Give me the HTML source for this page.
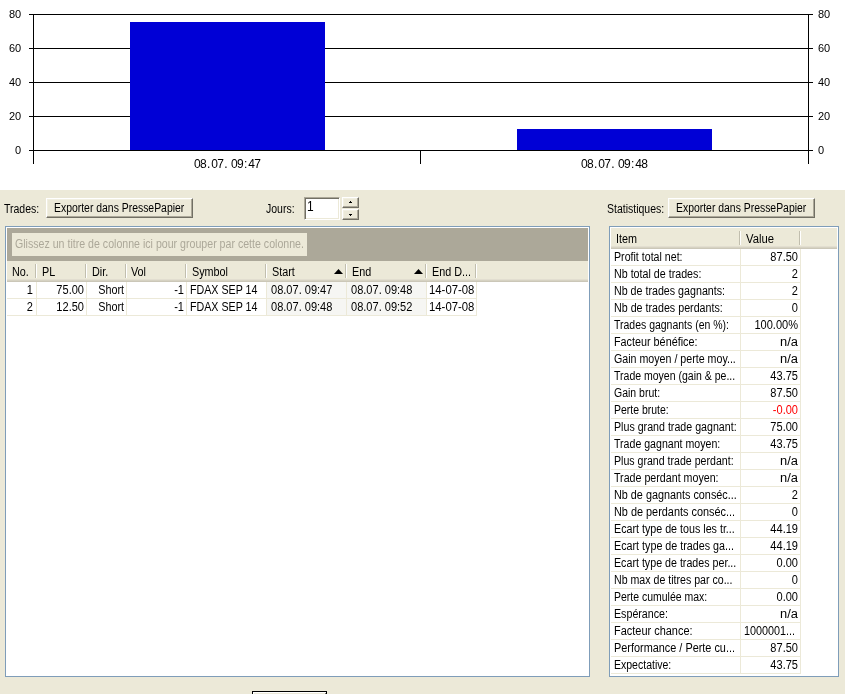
<!DOCTYPE html>
<html lang="fr">
<head>
<meta charset="utf-8">
<title>Trades</title>
<style>
*{box-sizing:border-box;margin:0;padding:0}
html,body{width:845px;height:694px;overflow:hidden;background:#ECE9D8}
body{position:relative;font-family:"Liberation Sans",Arial,sans-serif;font-size:12px;color:#000;line-height:14px}
#root{position:absolute;left:0;top:0;width:845px;height:694px;will-change:transform}
.abs{position:absolute}
.u{position:absolute;white-space:nowrap;height:14px;line-height:14px;font-size:12px;transform:scaleX(0.875);transform-origin:0 0}
.ur{position:absolute;white-space:nowrap;height:14px;line-height:14px;font-size:12px;text-align:right;transform:scaleX(0.875);transform-origin:100% 0}
#chart{position:absolute;left:0;top:0;width:845px;height:190px;background:#fff}
.hl{position:absolute;left:29px;width:784px;height:1px;background:#000}
.vl{position:absolute;width:1px;background:#000}
.bar{position:absolute;background:#0000D6}
.ax{position:absolute;white-space:nowrap;font-size:11px;height:13px;line-height:13px;letter-spacing:-.12px}
.axr{position:absolute;white-space:nowrap;font-size:11px;height:13px;line-height:13px;width:24px;text-align:right;letter-spacing:-.12px}
.xl{position:absolute;white-space:nowrap;font-size:12px;height:14px;line-height:14px;letter-spacing:-.67px}
.xl b{font-weight:normal;margin-left:1px;letter-spacing:.8px}
.btn{position:absolute;background:#ECE9D8;border:1px solid;border-color:#fff #716F64 #716F64 #fff;box-shadow:inset -1px -1px 0 #ACA899,inset 1px 1px 0 #F1EFE2}
.grid{position:absolute;background:#fff;border:1px solid #7F9DB9}
.hdr{position:absolute;background:#ECE9D8}
.hdr i{position:absolute;left:0;right:0;height:1px}
.sep{position:absolute;width:2px;border-left:1px solid #C1BEAE;border-right:1px solid #fff}
.gl{position:absolute;background:#ECE9D8}
.tri{position:absolute;width:0;height:0;border-left:5px solid transparent;border-right:5px solid transparent;border-bottom:5px solid #000}
</style>
</head>
<body>
<div id="root">
<div id="chart">
<div class="hl" style="top:14px"></div>
<div class="hl" style="top:48px"></div>
<div class="hl" style="top:82px"></div>
<div class="hl" style="top:116px"></div>
<div class="hl" style="top:150px"></div>
<div class="vl" style="left:33px;top:14px;height:150px"></div>
<div class="vl" style="left:808px;top:14px;height:150px"></div>
<div class="vl" style="left:420px;top:150px;height:14px"></div>
<div class="bar" style="left:130px;top:22px;width:195px;height:128px"></div>
<div class="bar" style="left:517px;top:129px;width:195px;height:21px"></div>
<div class="axr" style="left:-3px;top:8px">80</div>
<div class="ax" style="left:818px;top:8px">80</div>
<div class="axr" style="left:-3px;top:42px">60</div>
<div class="ax" style="left:818px;top:42px">60</div>
<div class="axr" style="left:-3px;top:76px">40</div>
<div class="ax" style="left:818px;top:76px">40</div>
<div class="axr" style="left:-3px;top:110px">20</div>
<div class="ax" style="left:818px;top:110px">20</div>
<div class="axr" style="left:-3px;top:144px">0</div>
<div class="ax" style="left:818px;top:144px">0</div>
<div class="xl" style="left:194px;top:157px">08<b>.</b>07<b>.</b> 09<b>:</b>47</div>
<div class="xl" style="left:581px;top:157px">08<b>.</b>07<b>.</b> 09<b>:</b>48</div>
</div>
<span class="u" style="left:4px;top:202px">Trades:</span>
<div class="btn" style="left:46px;top:198px;width:147px;height:20px"><span class="u" style="left:7px;top:2px;transform:scaleX(0.868)">Exporter dans PressePapier</span></div>
<span class="u" style="left:266px;top:202px">Jours:</span>
<div class="abs" style="left:304px;top:197px;width:36px;height:23px;background:#fff;border:1px solid;border-color:#ACA899 #fff #fff #ACA899;box-shadow:inset 1px 1px 0 #716F64,inset -1px -1px 0 #ECE9D8"><span class="u" style="left:2px;top:-1px;font-size:15px;height:17px;line-height:17px;transform:scaleX(.8)">1</span></div>
<div class="btn" style="left:342px;top:197px;width:17px;height:11px"></div>
<div class="btn" style="left:342px;top:209px;width:17px;height:11px"></div>
<div class="abs" style="left:350px;top:201px;width:1px;height:1px;background:#000"></div><div class="abs" style="left:349px;top:202px;width:3px;height:1px;background:#000"></div>
<div class="abs" style="left:349px;top:214px;width:3px;height:1px;background:#000"></div><div class="abs" style="left:350px;top:215px;width:1px;height:1px;background:#000"></div>
<span class="u" style="left:607px;top:202px">Statistiques:</span>
<div class="btn" style="left:668px;top:198px;width:147px;height:20px"><span class="u" style="left:7px;top:2px;transform:scaleX(0.868)">Exporter dans PressePapier</span></div>
<div class="grid" style="left:5px;top:226px;width:585px;height:451px">
<div class="abs" style="left:1px;top:1px;width:581px;height:33px;background:#ACA899"></div>
<div class="abs" style="left:6px;top:6px;width:295px;height:23px;background:#ECE9D8"><span class="u" style="left:3px;top:4px;transform:scaleX(0.884);color:#ACA899">Glissez un titre de colonne ici pour grouper par cette colonne.</span></div>
<div class="hdr" style="left:1px;top:34px;width:581px;height:21px"><i style="bottom:2px;background:#E2DED0"></i><i style="bottom:1px;background:#D6D2C2"></i><i style="bottom:0;background:#CBC7B8"></i>
<span class="u" style="left:5px;top:4px;transform:scaleX(0.9)">No.</span>
<div class="sep" style="left:28px;top:3px;height:14px"></div>
<span class="u" style="left:35px;top:4px;transform:scaleX(0.9)">PL</span>
<div class="sep" style="left:78px;top:3px;height:14px"></div>
<span class="u" style="left:85px;top:4px;transform:scaleX(0.9)">Dir.</span>
<div class="sep" style="left:118px;top:3px;height:14px"></div>
<span class="u" style="left:124px;top:4px;transform:scaleX(0.9)">Vol</span>
<div class="sep" style="left:178px;top:3px;height:14px"></div>
<span class="u" style="left:185px;top:4px;transform:scaleX(0.9)">Symbol</span>
<div class="sep" style="left:258px;top:3px;height:14px"></div>
<span class="u" style="left:265px;top:4px;transform:scaleX(0.9)">Start</span>
<div class="sep" style="left:338px;top:3px;height:14px"></div>
<span class="u" style="left:345px;top:4px;transform:scaleX(0.9)">End</span>
<div class="sep" style="left:418px;top:3px;height:14px"></div>
<span class="u" style="left:425px;top:4px;transform:scaleX(0.9)">End D...</span>
<div class="sep" style="left:468px;top:3px;height:14px"></div>
<svg class="abs" style="left:327px;top:8px" width="9" height="5" viewBox="0 0 9 5"><polygon points="0,5 4.5,0 9,5" fill="#000"/></svg>
<svg class="abs" style="left:407px;top:8px" width="9" height="5" viewBox="0 0 9 5"><polygon points="0,5 4.5,0 9,5" fill="#000"/></svg>
</div>
<div class="abs" style="left:261px;top:55px;width:79px;height:33px;background:#F6F6F3"></div>
<div class="abs" style="left:341px;top:55px;width:79px;height:33px;background:#F6F6F3"></div>
<span class="ur" style="left:-53px;width:80px;top:56px;transform:scaleX(0.92)">1</span>
<span class="ur" style="left:-2px;width:80px;top:56px;transform:scaleX(0.92)">75.00</span>
<span class="ur" style="left:38px;width:80px;top:56px;transform:scaleX(0.9)">Short</span>
<span class="ur" style="left:98px;width:80px;top:56px;transform:scaleX(0.92)">-1</span>
<span class="u" style="left:184px;top:56px;transform:scaleX(0.89)">FDAX SEP 14</span>
<span class="u" style="left:264.5px;top:56px;transform:scaleX(0.92)">08.07. 09:47</span>
<span class="u" style="left:344.5px;top:56px;transform:scaleX(0.92)">08.07. 09:48</span>
<span class="u" style="left:423px;top:56px;transform:scaleX(0.945)">14-07-08</span>
<div class="gl" style="left:1px;top:71px;width:470px;height:1px"></div>
<span class="ur" style="left:-53px;width:80px;top:73px;transform:scaleX(0.92)">2</span>
<span class="ur" style="left:-2px;width:80px;top:73px;transform:scaleX(0.92)">12.50</span>
<span class="ur" style="left:38px;width:80px;top:73px;transform:scaleX(0.9)">Short</span>
<span class="ur" style="left:98px;width:80px;top:73px;transform:scaleX(0.92)">-1</span>
<span class="u" style="left:184px;top:73px;transform:scaleX(0.89)">FDAX SEP 14</span>
<span class="u" style="left:264.5px;top:73px;transform:scaleX(0.92)">08.07. 09:48</span>
<span class="u" style="left:344.5px;top:73px;transform:scaleX(0.92)">08.07. 09:52</span>
<span class="u" style="left:423px;top:73px;transform:scaleX(0.945)">14-07-08</span>
<div class="gl" style="left:1px;top:88px;width:470px;height:1px"></div>
<div class="gl" style="left:30px;top:55px;width:1px;height:34px"></div>
<div class="gl" style="left:80px;top:55px;width:1px;height:34px"></div>
<div class="gl" style="left:120px;top:55px;width:1px;height:34px"></div>
<div class="gl" style="left:180px;top:55px;width:1px;height:34px"></div>
<div class="gl" style="left:260px;top:55px;width:1px;height:34px"></div>
<div class="gl" style="left:340px;top:55px;width:1px;height:34px"></div>
<div class="gl" style="left:420px;top:55px;width:1px;height:34px"></div>
<div class="gl" style="left:470px;top:55px;width:1px;height:34px"></div>
</div>
<div class="grid" style="left:609px;top:226px;width:230px;height:451px">
<div class="hdr" style="left:1px;top:1px;width:226px;height:21px"><i style="bottom:2px;background:#E2DED0"></i><i style="bottom:1px;background:#D6D2C2"></i><i style="bottom:0;background:#CBC7B8"></i>
<span class="u" style="left:5px;top:4px;transform:scaleX(0.9)">Item</span><div class="sep" style="left:128px;top:3px;height:14px"></div>
<span class="u" style="left:135px;top:4px;transform:scaleX(0.94)">Value</span><div class="sep" style="left:188px;top:3px;height:14px"></div>
</div>
<span class="u" style="left:4px;top:23px;transform:scaleX(0.886)">Profit total net:</span>
<span class="ur" style="left:107.5px;width:80px;top:23px;transform:scaleX(0.92)">87.50</span>
<div class="gl" style="left:1px;top:38px;width:190px;height:1px"></div>
<span class="u" style="left:4px;top:40px;transform:scaleX(0.891)">Nb total de trades:</span>
<span class="ur" style="left:107.5px;width:80px;top:40px;transform:scaleX(0.92)">2</span>
<div class="gl" style="left:1px;top:55px;width:190px;height:1px"></div>
<span class="u" style="left:4px;top:57px;transform:scaleX(0.89)">Nb de trades gagnants:</span>
<span class="ur" style="left:107.5px;width:80px;top:57px;transform:scaleX(0.92)">2</span>
<div class="gl" style="left:1px;top:72px;width:190px;height:1px"></div>
<span class="u" style="left:4px;top:74px;transform:scaleX(0.891)">Nb de trades perdants:</span>
<span class="ur" style="left:107.5px;width:80px;top:74px;transform:scaleX(0.92)">0</span>
<div class="gl" style="left:1px;top:89px;width:190px;height:1px"></div>
<span class="u" style="left:4px;top:91px;transform:scaleX(0.873)">Trades gagnants (en %):</span>
<span class="ur" style="left:107.5px;width:80px;top:91px;transform:scaleX(0.92)">100.00%</span>
<div class="gl" style="left:1px;top:106px;width:190px;height:1px"></div>
<span class="u" style="left:4px;top:108px;transform:scaleX(0.9)">Facteur bénéfice:</span>
<span class="ur" style="left:107.5px;width:80px;top:108px;transform:scaleX(1.075)">n/a</span>
<div class="gl" style="left:1px;top:123px;width:190px;height:1px"></div>
<span class="u" style="left:4px;top:125px;transform:scaleX(0.888)">Gain moyen / perte moy...</span>
<span class="ur" style="left:107.5px;width:80px;top:125px;transform:scaleX(1.075)">n/a</span>
<div class="gl" style="left:1px;top:140px;width:190px;height:1px"></div>
<span class="u" style="left:4px;top:142px;transform:scaleX(0.876)">Trade moyen (gain &amp; pe...</span>
<span class="ur" style="left:107.5px;width:80px;top:142px;transform:scaleX(0.92)">43.75</span>
<div class="gl" style="left:1px;top:157px;width:190px;height:1px"></div>
<span class="u" style="left:4px;top:159px;transform:scaleX(0.874)">Gain brut:</span>
<span class="ur" style="left:107.5px;width:80px;top:159px;transform:scaleX(0.92)">87.50</span>
<div class="gl" style="left:1px;top:174px;width:190px;height:1px"></div>
<span class="u" style="left:4px;top:176px;transform:scaleX(0.871)">Perte brute:</span>
<span class="ur" style="left:107.5px;width:80px;top:176px;transform:scaleX(0.92);color:#FF0000">-0.00</span>
<div class="gl" style="left:1px;top:191px;width:190px;height:1px"></div>
<span class="u" style="left:4px;top:193px;transform:scaleX(0.888)">Plus grand trade gagnant:</span>
<span class="ur" style="left:107.5px;width:80px;top:193px;transform:scaleX(0.92)">75.00</span>
<div class="gl" style="left:1px;top:208px;width:190px;height:1px"></div>
<span class="u" style="left:4px;top:210px;transform:scaleX(0.883)">Trade gagnant moyen:</span>
<span class="ur" style="left:107.5px;width:80px;top:210px;transform:scaleX(0.92)">43.75</span>
<div class="gl" style="left:1px;top:225px;width:190px;height:1px"></div>
<span class="u" style="left:4px;top:227px;transform:scaleX(0.883)">Plus grand trade perdant:</span>
<span class="ur" style="left:107.5px;width:80px;top:227px;transform:scaleX(1.075)">n/a</span>
<div class="gl" style="left:1px;top:242px;width:190px;height:1px"></div>
<span class="u" style="left:4px;top:244px;transform:scaleX(0.889)">Trade perdant moyen:</span>
<span class="ur" style="left:107.5px;width:80px;top:244px;transform:scaleX(1.075)">n/a</span>
<div class="gl" style="left:1px;top:259px;width:190px;height:1px"></div>
<span class="u" style="left:4px;top:261px;transform:scaleX(0.902)">Nb de gagnants conséc...</span>
<span class="ur" style="left:107.5px;width:80px;top:261px;transform:scaleX(0.92)">2</span>
<div class="gl" style="left:1px;top:276px;width:190px;height:1px"></div>
<span class="u" style="left:4px;top:278px;transform:scaleX(0.907)">Nb de perdants conséc...</span>
<span class="ur" style="left:107.5px;width:80px;top:278px;transform:scaleX(0.92)">0</span>
<div class="gl" style="left:1px;top:293px;width:190px;height:1px"></div>
<span class="u" style="left:4px;top:295px;transform:scaleX(0.892)">Ecart type de tous les tr...</span>
<span class="ur" style="left:107.5px;width:80px;top:295px;transform:scaleX(0.92)">44.19</span>
<div class="gl" style="left:1px;top:310px;width:190px;height:1px"></div>
<span class="u" style="left:4px;top:312px;transform:scaleX(0.895)">Ecart type de trades ga...</span>
<span class="ur" style="left:107.5px;width:80px;top:312px;transform:scaleX(0.92)">44.19</span>
<div class="gl" style="left:1px;top:327px;width:190px;height:1px"></div>
<span class="u" style="left:4px;top:329px;transform:scaleX(0.89)">Ecart type de trades per...</span>
<span class="ur" style="left:107.5px;width:80px;top:329px;transform:scaleX(0.92)">0.00</span>
<div class="gl" style="left:1px;top:344px;width:190px;height:1px"></div>
<span class="u" style="left:4px;top:346px;transform:scaleX(0.884)">Nb max de titres par co...</span>
<span class="ur" style="left:107.5px;width:80px;top:346px;transform:scaleX(0.92)">0</span>
<div class="gl" style="left:1px;top:361px;width:190px;height:1px"></div>
<span class="u" style="left:4px;top:363px;transform:scaleX(0.873)">Perte cumulée max:</span>
<span class="ur" style="left:107.5px;width:80px;top:363px;transform:scaleX(0.92)">0.00</span>
<div class="gl" style="left:1px;top:378px;width:190px;height:1px"></div>
<span class="u" style="left:4px;top:380px;transform:scaleX(0.889)">Espérance:</span>
<span class="ur" style="left:107.5px;width:80px;top:380px;transform:scaleX(1.075)">n/a</span>
<div class="gl" style="left:1px;top:395px;width:190px;height:1px"></div>
<span class="u" style="left:4px;top:397px;transform:scaleX(0.913)">Facteur chance:</span>
<span class="u" style="left:133.5px;top:397px;transform:scaleX(0.9)">1000001...</span>
<div class="gl" style="left:1px;top:412px;width:190px;height:1px"></div>
<span class="u" style="left:4px;top:414px;transform:scaleX(0.907)">Performance / Perte cu...</span>
<span class="ur" style="left:107.5px;width:80px;top:414px;transform:scaleX(0.92)">87.50</span>
<div class="gl" style="left:1px;top:429px;width:190px;height:1px"></div>
<span class="u" style="left:4px;top:431px;transform:scaleX(0.876)">Expectative:</span>
<span class="ur" style="left:107.5px;width:80px;top:431px;transform:scaleX(0.92)">43.75</span>
<div class="gl" style="left:1px;top:446px;width:190px;height:1px"></div>
<div class="gl" style="left:130px;top:22px;width:1px;height:425px"></div>
<div class="gl" style="left:190px;top:22px;width:1px;height:425px"></div>
</div>
<div class="abs" style="left:252px;top:691px;width:75px;height:23px;border:1px solid #000;background:#ECE9D8;box-shadow:inset 1px 1px 0 #fff,inset -1px -1px 0 #716F64"></div>
</div>
</body>
</html>
